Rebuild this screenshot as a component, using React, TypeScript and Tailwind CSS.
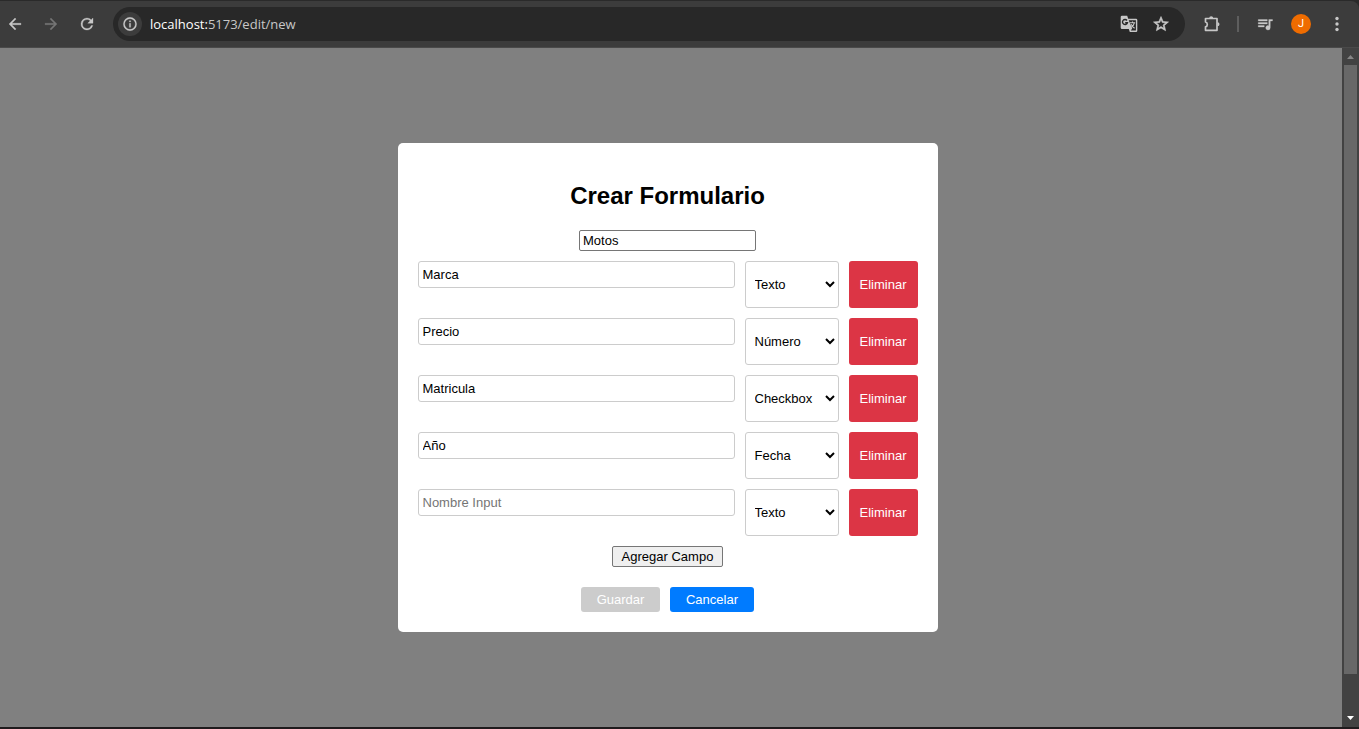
import { useState } from "react";

type Field = { id: number; name: string; type: string };

const fieldTypes = ["Texto", "Número", "Checkbox", "Fecha"];

const initialFields: Field[] = [
  { id: 1, name: "Marca", type: "Texto" },
  { id: 2, name: "Precio", type: "Número" },
  { id: 3, name: "Matricula", type: "Checkbox" },
  { id: 4, name: "Año", type: "Fecha" },
  { id: 5, name: "", type: "Texto" },
];

function Icon({ d, size = 18, weight = 0.4 }: { d: string; size?: number; weight?: number }) {
  return (
    <svg viewBox="0 0 24 24" width={size} height={size} fill="currentColor" stroke="currentColor" strokeWidth={weight} aria-hidden="true">
      <path d={d} />
    </svg>
  );
}

function BrowserBar() {
  return (
    <div className="bg-[#2a2a2a] pt-px">
      <header className="flex h-[47px] items-center rounded-tr-lg border-b border-[#4a4a4a] bg-[#3c3c3c] pr-3 pl-1 text-[#c7c7c7]">
        <nav className="flex items-center gap-3.5">
          <button type="button" aria-label="Atrás" className="flex size-[22px] items-center justify-center">
            <Icon d="M20 11H7.83l5.59-5.59L12 4l-8 8 8 8 1.41-1.41L7.83 13H20z" />
          </button>
          <button type="button" aria-label="Adelante" className="flex size-[22px] items-center justify-center text-[#757575]">
            <Icon d="M12 4l-1.41 1.41L16.17 11H4v2h12.17l-5.58 5.59L12 20l8-8z" />
          </button>
          <button type="button" aria-label="Recargar" className="flex size-[22px] items-center justify-center">
            <Icon d="M17.65 6.35A7.96 7.96 0 0 0 12 4a8 8 0 1 0 7.73 10h-2.08A6 6 0 1 1 12 6c1.66 0 3.14.69 4.22 1.78L13 11h7V4z" />
          </button>
        </nav>
        <div className="ml-[15px] flex h-[34px] flex-1 items-center rounded-full bg-[#282828] pr-[15px] pl-[5px]">
          <button type="button" aria-label="Información del sitio" className="flex size-6 items-center justify-center rounded-full bg-[#3c3c3c]">
            <Icon size={16} d="M11 7h2v2h-2zm0 4h2v6h-2zm1-9a10 10 0 1 0 0 20 10 10 0 0 0 0-20zm0 18a8 8 0 1 1 0-16 8 8 0 0 1 0 16z" />
          </button>
          <p className="ml-2 flex-1 font-['Open_Sans',sans-serif] text-[13px] leading-5 text-[#c7c7c7]">
            <span className="text-white">localhost:</span>5173/edit/new
          </p>
          <div className="flex items-center gap-3.5">
            <button type="button" aria-label="Traducir">
              <svg viewBox="0 0 18 18" width="18" height="18" aria-hidden="true">
                <path d="M2 .8h5.200l1 3H16a1.300 1.300 0 0 1 1.300 1.300v10.600A1.300 1.300 0 0 1 16 17H9.800l-1-3H2a1.300 1.300 0 0 1-1.300-1.300V2.100A1.300 1.300 0 0 1 2 .8z" fill="#c7c7c7" />
                <path d="M8.700 5.200H15.900v10.400H10.800l1.400-2z" fill="#282828" />
                <path d="M7 5.500A2.500 2.500 0 1 0 7.400 7.700H5.200" fill="none" stroke="#282828" strokeWidth="1.400" />
                <path d="M9.800 7.800h5.400M12.500 6.500v1.300M14.300 7.800c-.4 2-1.500 3.400-3 4.400M11.200 9.200c.6 1.500 1.700 2.800 3.400 4" fill="none" stroke="#c7c7c7" strokeWidth="1.100" />
              </svg>
            </button>
            <button type="button" aria-label="Marcador">
              <Icon weight={0.8} d="M22 9.240l-7.190-.62L12 2 9.190 8.630 2 9.240l5.460 4.730L5.820 21 12 17.270 18.180 21l-1.630-7.030zM12 15.400l-3.760 2.270 1-4.280-3.320-2.880 4.380-.38L12 6.100l1.710 4.040 4.380.38-3.320 2.880 1 4.280z" />
            </button>
          </div>
        </div>
        <div className="ml-[18px] flex items-center gap-4">
          <button type="button" aria-label="Extensiones">
            <svg viewBox="0 0 18 18" width="18" height="18" aria-hidden="true">
              <path d="M2.500 3.500h11.500v11.800H2.500v-3.500c2.400-.4 2.400-4.400 0-4.800z" fill="none" stroke="#c7c7c7" strokeWidth="1.700" strokeLinejoin="round" />
              <path d="M6.200 3.200a2 2 0 0 1 4 0zM14.500 7.200a2 2 0 0 1 0 4z" fill="#c7c7c7" />
            </svg>
          </button>
          <span className="h-4 w-0.5 bg-[#5e5e5e]" />
          <button type="button" aria-label="Control multimedia" className="ml-px">
            <Icon d="M15 6H3v2h12zm0 4H3v2h12zM3 16h8v-2H3zM17 6v8.180A3 3 0 1 0 19 17V8h3V6z" />
          </button>
          <button type="button" aria-label="Perfil" className="ml-px flex size-5 items-center justify-center rounded-full bg-[#ef6c00] font-['Roboto',sans-serif] text-[11px] text-white">
            J
          </button>
          <button type="button" aria-label="Menú">
            <svg viewBox="0 0 20 20" width="20" height="20" fill="currentColor" aria-hidden="true">
              <circle cx="10" cy="4.500" r="1.700" />
              <circle cx="10" cy="10" r="1.700" />
              <circle cx="10" cy="15.500" r="1.700" />
            </svg>
          </button>
        </div>
      </header>
    </div>
  );
}

function ScrollTrack() {
  return (
    <div aria-hidden="true" className="flex w-[17px] flex-col items-center bg-[#424242]">
      <div className="flex h-[17px] items-center">
        <svg viewBox="0 0 7 4" width="7" height="4">
          <path d="M0 4l3.500-4L7 4z" fill="#868686" />
        </svg>
      </div>
      <div className="w-[13px] flex-1 bg-[#686868]" />
      <div className="flex h-[53px] items-end pb-[7px]">
        <svg viewBox="0 0 7 4" width="7" height="4">
          <path d="M0 0l3.500 4L7 0z" fill="#fff" />
        </svg>
      </div>
    </div>
  );
}

export default function App() {
  const [title, setTitle] = useState("Motos");
  const [fields, setFields] = useState<Field[]>(initialFields);

  const update = (id: number, patch: Partial<Field>) =>
    setFields(fields.map((f) => (f.id === id ? { ...f, ...patch } : f)));
  const incomplete = fields.some((f) => f.name === "");

  return (
    <div className="flex min-h-screen flex-col bg-[#808080] font-['Liberation_Sans',Arial,sans-serif] text-[13px] text-black">
      <BrowserBar />
      <div className="flex flex-1 border-b-2 border-[#1f1b1d]">
        <main className="flex flex-1 items-center justify-center pr-[7px]">
          <form
            onSubmit={(e) => e.preventDefault()}
            className="flex w-full max-w-[540px] flex-col items-center rounded-[5px] bg-white p-5"
          >
            <h2 className="mt-5 mb-[22px] text-2xl leading-[25px] font-bold">Crear Formulario</h2>
            <input
              aria-label="Nombre del formulario"
              value={title}
              onChange={(e) => setTitle(e.target.value)}
              className="h-[21px] w-[177px] rounded-[2px] border border-[#767676] px-[3px]"
            />
            <div className="my-2.5 flex w-full flex-col gap-2.5">
              {fields.map((f) => (
                <div key={f.id} className="flex h-[47px] gap-2.5">
                  <input
                    aria-label="Nombre Input"
                    placeholder="Nombre Input"
                    value={f.name}
                    onChange={(e) => update(f.id, { name: e.target.value })}
                    className="h-[27px] min-w-0 flex-1 rounded-[3px] border border-[#ccc] px-1 placeholder:text-[#757575]"
                  />
                  <select
                    aria-label="Tipo de campo"
                    value={f.type}
                    onChange={(e) => update(f.id, { type: e.target.value })}
                    className="w-[94px] rounded-[3px] border border-[#ccc] bg-white p-[5px]"
                  >
                    {fieldTypes.map((t) => (
                      <option key={t}>{t}</option>
                    ))}
                  </select>
                  <button
                    type="button"
                    onClick={() => setFields(fields.filter((x) => x.id !== f.id))}
                    className="w-[69px] rounded-[3px] bg-[#dc3545] text-white"
                  >
                    Eliminar
                  </button>
                </div>
              ))}
            </div>
            <button
              type="button"
              onClick={() => setFields([...fields, { id: Date.now(), name: "", type: "Texto" }])}
              className="h-[21px] w-[111px] rounded-[2px] border border-[#767676] bg-[#efefef] leading-4"
            >
              Agregar Campo
            </button>
            <div className="mt-5 flex gap-2.5">
              <button type="submit" disabled={incomplete} className="h-[25px] w-[79px] rounded-[3px] bg-[#007bff] text-white disabled:bg-[#ccc]">
                Guardar
              </button>
              <button type="button" className="h-[25px] w-[84px] rounded-[3px] bg-[#007bff] text-white">
                Cancelar
              </button>
            </div>
          </form>
        </main>
        <ScrollTrack />
      </div>
    </div>
  );
}
